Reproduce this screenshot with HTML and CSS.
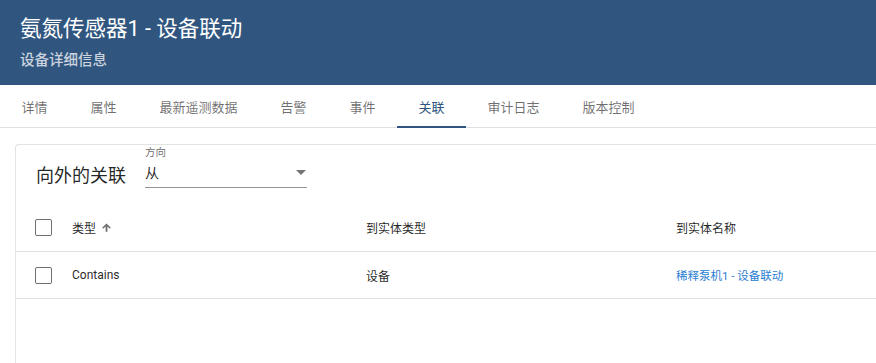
FILE: index.html
```html
<!DOCTYPE html>
<html lang="zh-CN">
<head>
<meta charset="utf-8">
<title>氨氮传感器1 - 设备联动</title>
<link rel="stylesheet" href="styles.css">
</head>
<body>
<header class="page-header">
  <div class="page-title">氨氮传感器1 - 设备联动</div>
  <div class="page-subtitle">设备详细信息</div>
</header>
<nav class="tabs">
  <div class="tab">详情</div>
  <div class="tab">属性</div>
  <div class="tab">最新遥测数据</div>
  <div class="tab">告警</div>
  <div class="tab">事件</div>
  <div class="tab active">关联</div>
  <div class="tab">审计日志</div>
  <div class="tab">版本控制</div>
</nav>
<main class="content">
  <section class="card">
    <div class="toolbar">
      <div class="toolbar-title">向外的关联</div>
      <div class="field">
        <div class="field-label">方向</div>
        <div class="field-value"><span>从</span><span class="caret"></span></div>
      </div>
    </div>
    <div class="table">
      <div class="row head">
        <div class="cell"><span class="checkbox"></span></div>
        <div class="cell">类型<svg class="sort" viewBox="0 0 24 24"><path d="M2.5 12.5l2.3 2.3L10 9.6V21h4V9.6l5.2 5.2 2.3-2.3L12 3z"/></svg></div>
        <div class="cell">到实体类型</div>
        <div class="cell">到实体名称</div>
      </div>
      <div class="row">
        <div class="cell"><span class="checkbox"></span></div>
        <div class="cell">Contains</div>
        <div class="cell">设备</div>
        <div class="cell"><a class="link" href="#">稀释泵机1 - 设备联动</a></div>
      </div>
    </div>
  </section>
</main>
</body>
</html>
```
FILE: styles.css
```css
* { box-sizing: border-box; }
html, body { margin: 0; padding: 0; }
body {
  width: 876px;
  height: 363px;
  overflow: hidden;
  background: #fff;
  font-family: Roboto, "Noto Sans CJK SC", sans-serif;
  color: rgba(0,0,0,0.87);
}
.page-header {
  height: 85px;
  background: #305680;
  padding: 14px 0 0 20px;
  display: flex;
  flex-direction: column;
}
.page-title {
  color: #fff;
  font-size: 21.5px;
  line-height: 30px;
}
.page-subtitle {
  margin-top: 7px;
  color: rgba(255,255,255,0.75);
  font-size: 14.5px;
  line-height: 20px;
  font-weight: 500;
}
.tabs {
  display: flex;
  height: 43px;
  border-bottom: 1px solid #e0e0e0;
}
.tab {
  height: 42px;
  padding: 0 21.5px;
  display: flex;
  align-items: center;
  font-size: 13px;
  color: rgba(0,0,0,0.58);
  position: relative;
}
.tab.active { color: #305680; }
.tab.active::after {
  content: "";
  position: absolute;
  left: 0; right: 0; bottom: -1px;
  height: 2px;
  background: #305680;
}
.content {
  padding: 16px 0 0 15px;
}
.card {
  width: 861px;
  height: 219px;
  background: #fff;
  border-radius: 4px 0 0 0;
  border-top: 1px solid #e3e3e3;
  border-left: 1px solid #e3e3e3;
}
.toolbar {
  height: 58px;
  display: flex;
  align-items: center;
  padding-left: 20px;
}
.toolbar-title {
  font-size: 18px;
  line-height: 24px;
  margin-right: 19px;
  margin-top: 4px;
}
.field {
  align-self: flex-start;
  margin-top: 2px;
  width: 162px;
  display: flex;
  flex-direction: column;
}
.field-label {
  font-size: 10.5px;
  line-height: 12px;
  color: rgba(0,0,0,0.6);
}
.field-value {
  height: 29px;
  display: flex;
  align-items: center;
  justify-content: space-between;
  border-bottom: 1px solid #949494;
  font-size: 14px;
  padding-bottom: 2px;
}
.caret {
  width: 0; height: 0;
  border-left: 5px solid transparent;
  border-right: 5px solid transparent;
  border-top: 5px solid #757575;
  margin-right: 1px;
}
.row {
  display: grid;
  grid-template-columns: 37px 294px 310px 1fr;
  padding-left: 19px;
  height: 47px;
  border-bottom: 1px solid #e0e0e0;
  font-size: 12px;
}
.row.head { height: 49px; }
.cell {
  display: flex;
  align-items: center;
}
.checkbox {
  width: 17px;
  height: 17px;
  border: 1.5px solid #707070;
  border-radius: 2px;
}
.sort {
  width: 11px;
  height: 11px;
  margin-left: 5px;
  fill: #707070;
}
.link {
  color: #2a7dd2;
  font-size: 11.5px;
  text-decoration: none;
}
```
